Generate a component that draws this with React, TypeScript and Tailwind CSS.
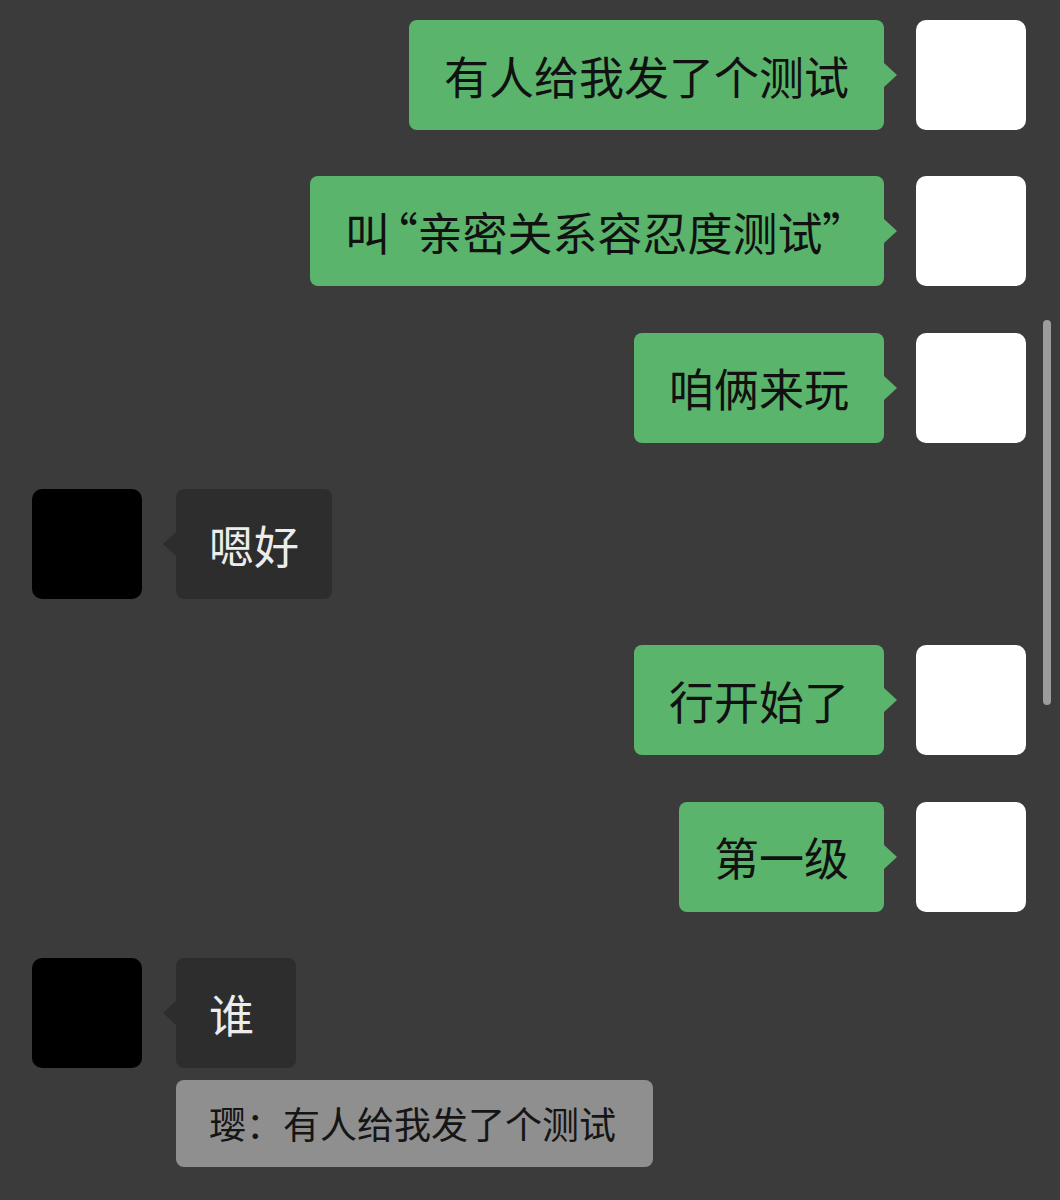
import type { ReactNode } from 'react'

const FONT = '"Noto Sans CJK SC", "Noto Sans", sans-serif'

function Mine({ children }: { children: ReactNode }) {
  return (
    <div className="flex h-[110px] items-center justify-end pr-[34px]">
      <div className="relative flex h-full items-center rounded-[8px] bg-[#5bb46c] px-[35px] text-[45px] leading-none text-[#111]">
        {children}
        <span className="absolute right-[-13px] top-1/2 h-0 w-0 -translate-y-1/2 border-y-[12px] border-l-[13px] border-y-transparent border-l-[#5bb46c]" />
      </div>
      <div className="ml-[32px] h-[110px] w-[110px] rounded-[10px] bg-white" />
    </div>
  )
}

function Theirs({ children }: { children: ReactNode }) {
  return (
    <div className="flex h-[110px] items-center pl-[32px]">
      <div className="h-[110px] w-[110px] rounded-[10px] bg-black" />
      <div className="relative ml-[34px] flex h-full min-w-[120px] items-center rounded-[8px] bg-[#2d2d2d] px-[33px] text-[45px] leading-none text-[#ececec]">
        <span className="absolute left-[-13px] top-1/2 h-0 w-0 -translate-y-1/2 border-y-[12px] border-r-[13px] border-y-transparent border-r-[#2d2d2d]" />
        {children}
      </div>
    </div>
  )
}

export default function App() {
  return (
    <div className="relative h-[1200px] w-[1060px] overflow-hidden bg-[#3b3b3b]" style={{ fontFamily: FONT }}>
      <div className="flex flex-col gap-[46.35px] pt-[20px]">
        <Mine>有人给我发了个测试</Mine>
        <Mine>
          <span className="[font-feature-settings:'palt']">
            叫<span className="ml-[5px]">“</span>亲密关系容忍度测试<span className="mr-[4px]">”</span>
          </span>
        </Mine>
        <Mine>咱俩来玩</Mine>
        <Theirs>嗯好</Theirs>
        <Mine>行开始了</Mine>
        <Mine>第一级</Mine>
        <div>
          <Theirs>谁</Theirs>
          <div className="ml-[176px] mt-[12px] flex h-[87px] w-fit items-center rounded-[8px] bg-[#8f8f8f] pl-[33px] pr-[37px] text-[37px] leading-none text-[#151515]">
            璎：有人给我发了个测试
          </div>
        </div>
      </div>
      <div className="absolute left-[1043px] top-[320px] h-[385px] w-[8px] rounded-full bg-[#9c9c9c]" />
    </div>
  )
}
